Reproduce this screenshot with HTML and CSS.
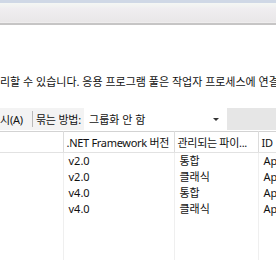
FILE: index.html
```html
<!DOCTYPE html>
<html lang="ko">
<head>
  <meta charset="UTF-8" />
  <title>응용 프로그램 풀</title>
  <link rel="stylesheet" href="styles.css">
</head>
<body>
  <div class="titlebar"></div>

  <p class="desc">리할 수 있습니다. 응용 프로그램 풀은 작업자 프로세스에 연결</p>

  <!-- toolbar -->
  <div class="toolbar">
    <span class="tool">시(A)</span>
    <span class="sep"></span>
    <span class="tool">묶는 방법:</span>
    <div class="combo">
      <span>그룹화 안 함</span>
      <span class="arrow"></span>
    </div>
    <div class="tool-rest"></div>
  </div>

  <!-- list view -->
  <table class="list">
    <colgroup>
      <col class="c1"><col class="c2"><col class="c3"><col class="c4">
    </colgroup>
    <thead>
      <tr>
        <th></th>
        <th>.NET Framework 버전</th>
        <th>관리되는 파이...</th>
        <th>ID</th>
      </tr>
    </thead>
    <tbody>
      <tr><td></td><td>v2.0</td><td>통합</td><td>Ap</td></tr>
      <tr><td></td><td>v2.0</td><td>클래식</td><td>Ap</td></tr>
      <tr><td></td><td>v4.0</td><td>통합</td><td>Ap</td></tr>
      <tr><td></td><td>v4.0</td><td>클래식</td><td>Ap</td></tr>
      <tr class="filler"><td></td><td></td><td></td><td></td></tr>
    </tbody>
  </table>
</body>
</html>
```

FILE: styles.css
```css
* {
  box-sizing: border-box;
}

html {
  overflow: hidden;
}

body {
  margin: 0;
  width: 276px;
  height: 260px;
  overflow: hidden;
  background: #fff;
  color: #111;
  font-family: "Noto Sans", "Noto Sans CJK KR", sans-serif;
  font-size: 11px;
}

.titlebar {
  height: 25px;
  border-top: 3px solid #cfd8e6;
  border-bottom: 2px solid #c6c5c5;
  background: linear-gradient(#f4f7f4, #efedf0 30%, #e9e7e8 95%, #f4f3f3);
}

.desc {
  margin: 50px 0 0;
  height: 33px;
  line-height: 14px;
  white-space: nowrap;
}

.toolbar {
  display: flex;
  align-items: center;
  height: 22px;
  background: #f3f3f3;
  white-space: nowrap;
}

.tool {
  letter-spacing: -0.2px;
}

.sep {
  width: 1px;
  height: 16px;
  margin: 0 3px 0 9px;
  background: #b9b9b9;
}

.combo {
  display: flex;
  align-items: center;
  justify-content: space-between;
  width: 143px;
  height: 100%;
  margin-left: 3px;
  padding: 0 8px 0 5px;
  background: #fff;
}

.arrow {
  width: 0;
  height: 0;
  border-left: 3px solid transparent;
  border-right: 3px solid transparent;
  border-top: 3px solid #333;
}

.tool-rest {
  flex: 1;
  height: 100%;
  background: #e6e6e6;
}

.list {
  border-collapse: collapse;
  table-layout: fixed;
  width: 320px;
  margin-top: 1px;
  border-top: 1px solid #d3d3d3;
}

.c1 { width: 63px; }
.c2 { width: 111px; }
.c3 { width: 84px; }
.c4 { width: 62px; }

.list th {
  height: 21px;
  padding: 0 4px 0 3px;
  font-weight: normal;
  text-align: left;
  letter-spacing: -0.3px;
  white-space: nowrap;
  overflow: hidden;
  border-bottom: 1px solid #e2e2e2;
  border-left: 1px solid #dcdcdc;
}

.list th:first-child,
.list td:first-child {
  border-left: none;
}

.list td {
  height: 16px;
  padding: 0 5px;
  line-height: 16px;
  white-space: nowrap;
  border-left: 1px solid #efefef;
}

.list .filler td {
  height: 60px;
}
```
